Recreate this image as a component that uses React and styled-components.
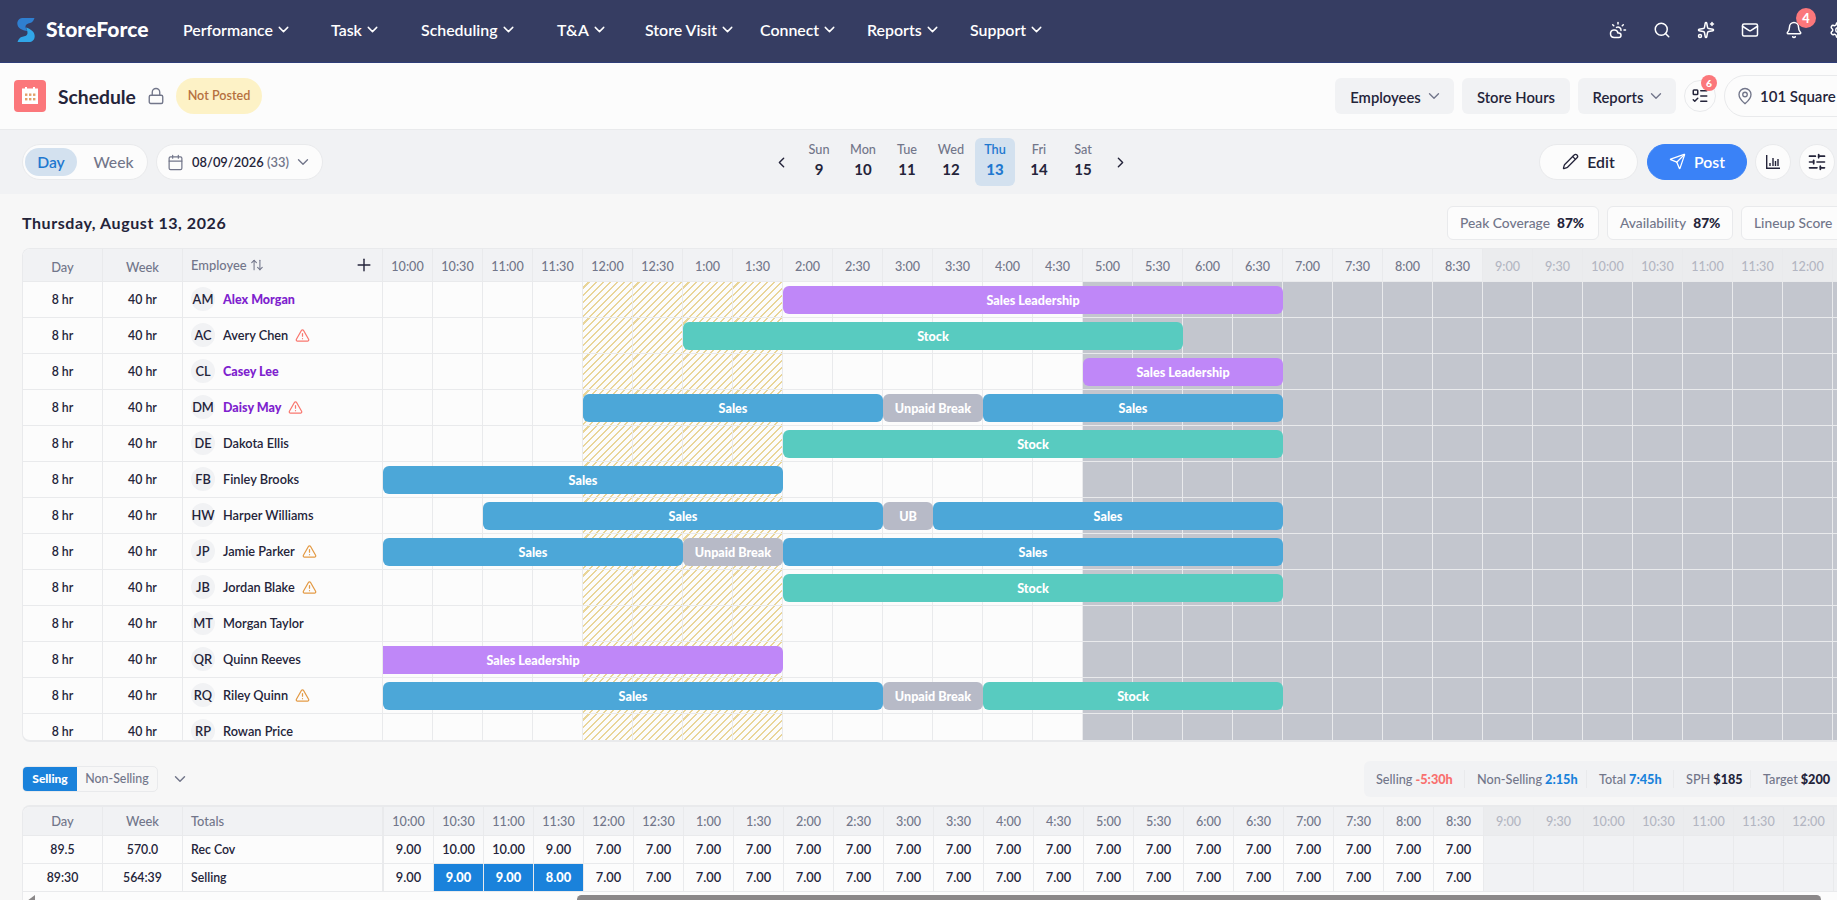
import React from "react";
import styled, { createGlobalStyle, css } from "styled-components";
import {
  AlertTriangle,
  ArrowUpDown,
  Bell,
  Calendar,
  ChevronDown,
  ChevronLeft,
  ChevronRight,
  CloudSun,
  ListTodo,
  Lock,
  Mail,
  MapPin,
  Pencil,
  Plus,
  Search,
  Send,
  Settings,
  SlidersHorizontal,
  Sparkles,
} from "lucide-react";

const GlobalStyle = createGlobalStyle`
  * {
    box-sizing: border-box;
  }
  body {
    margin: 0;
    background: #f7f7f7;
    color: #24243a;
    font-family: Lato, "Liberation Sans", sans-serif;
    overflow: hidden;
  }
  svg {
    flex: none;
  }
`;

const Page = styled.div`
  width: 1837px;
  height: 900px;
  overflow: hidden;
  display: flex;
  flex-direction: column;
`;

const NavBar = styled.header`
  flex: 0 0 63px;
  display: flex;
  align-items: center;
  background: #363d62;
  border-bottom: 1px solid #2f3d78;
  color: #fff;
  padding: 0 0 3px 17px;
`;

const Brand = styled.div`
  display: flex;
  align-items: center;
  gap: 11px;
  flex: 0 0 166px;
  font-size: 21px;
  line-height: 24px;
  font-weight: 900;
  letter-spacing: 0.1px;
`;

const BrandName = styled.span`
  margin-top: -2px;
`;

const NavItem = styled.div`
  flex: 0 0 ${({ $width }) => $width}px;
  display: flex;
  align-items: center;
  gap: 2px;
  padding-bottom: 1px;
  font-size: 15.9px;
  font-weight: 600;
  white-space: nowrap;
`;

const NavIcons = styled.div`
  margin-left: auto;
  display: flex;
  gap: 26px;
  margin-right: -10px;
`;

const IconSlot = styled.span`
  position: relative;
  display: flex;
  width: 18px;
  height: 18px;
  flex: none;
`;

const Badge = styled.span`
  position: absolute;
  top: ${({ $top }) => $top}px;
  left: ${({ $left }) => $left}px;
  width: ${({ $size }) => $size}px;
  height: ${({ $size }) => $size}px;
  border-radius: 50%;
  background: #fb777b;
  color: #fff;
  font-size: ${({ $size }) => $size * 0.64}px;
  font-weight: 900;
  display: flex;
  align-items: center;
  justify-content: center;
`;

const TitleBar = styled.div`
  flex: 0 0 67px;
  display: flex;
  align-items: center;
  padding: 0 0 1px 14px;
  background: #fcfcfc;
  border-bottom: 1px solid #e9eaec;
`;

const CalendarTile = styled.div`
  width: 32px;
  height: 32px;
  border-radius: 4px;
  background: #fb777b;
  display: flex;
  align-items: center;
  justify-content: center;
`;

const PageName = styled.h1`
  margin: 1px 12px 0 12px;
  width: 77px;
  font-size: 19.3px;
  font-weight: 700;
  white-space: nowrap;
`;

const StatusPill = styled.span`
  margin-left: 11px;
  width: 86px;
  height: 36px;
  border-radius: 18px;
  background: #fdf2c6;
  color: #b5703f;
  font-size: 12.6px;
  font-weight: 600;
  display: flex;
  align-items: center;
  justify-content: center;
`;

const HeaderActions = styled.div`
  margin-left: auto;
  display: flex;
  align-items: center;
  gap: 8px;
  margin-right: -60px;
`;

const SoftButton = styled.button`
  width: ${({ $width }) => $width}px;
  height: 36px;
  border: 0;
  border-radius: 6px;
  background: #f1f2f4;
  color: #24243a;
  font: 600 14.8px Lato, sans-serif;
  display: flex;
  align-items: center;
  justify-content: center;
  gap: 4px;
  padding: 2px 0 0;
  white-space: nowrap;
  svg {
    margin: -2px -4px 0 0;
  }
`;

const RoundButton = styled.div`
  position: relative;
  flex: none;
  width: ${({ $size }) => $size}px;
  height: ${({ $size }) => $size}px;
  border: 1px solid #e9eaec;
  border-radius: 50%;
  background: #fcfcfc;
  display: flex;
  align-items: center;
  justify-content: center;
`;

const StorePill = styled.div`
  width: 173px;
  height: 42px;
  border: 1px solid #e9eaec;
  border-radius: 21px;
  display: flex;
  align-items: center;
  gap: 6px;
  padding-left: 11px;
  font-size: 15px;
  font-weight: 600;
  white-space: nowrap;
`;

const Toolbar = styled.div`
  flex: 0 0 64px;
  display: grid;
  grid-template-columns: 751px auto 1fr;
  align-items: center;
  padding: 0 2px 0 22px;
  background: #f1f2f4;
`;

const ToolGroup = styled.div`
  display: flex;
  align-items: center;
  justify-content: ${({ $end }) => ($end ? "flex-end" : "flex-start")};
  gap: 8px;
`;

const pill = css`
  height: 36px;
  border: 1px solid #e9eaec;
  border-radius: 18px;
  background: #fcfcfc;
  display: flex;
  align-items: center;
`;

const Switcher = styled.div`
  ${pill}
  width: 126px;
  padding: 0 2px;
`;

const SwitchOption = styled.span`
  flex: none;
  width: ${({ $active }) => ($active ? 52 : 73)}px;
  height: 28px;
  border-radius: 14px;
  background: ${({ $active }) => ($active ? "#d3e1ef" : "transparent")};
  color: ${({ $active }) => ($active ? "#1f78cf" : "#72768a")};
  font-size: 15.7px;
  font-weight: ${({ $active }) => ($active ? 600 : 500)};
  display: flex;
  align-items: center;
  justify-content: center;
`;

const DatePill = styled.div`
  ${pill}
  width: 167px;
  padding-left: 10px;
  font-size: 12.9px;
  font-weight: 600;
  color: #72768a;
  svg:first-child {
    margin-right: 8px;
  }
  svg:last-child {
    margin-left: 5px;
  }
`;

const DateValue = styled.span`
  width: 75px;
  color: #24243a;
`;

const WeekStrip = styled.div`
  display: flex;
  align-items: center;
  gap: 4px;
`;

const ArrowSlot = styled.span`
  width: 22px;
  display: flex;
  justify-content: ${({ $right }) => ($right ? "flex-end" : "flex-start")};
`;

const DayTile = styled.div`
  width: 40px;
  height: 48px;
  border-radius: 6px;
  background: ${({ $active }) => ($active ? "#d3e1ef" : "transparent")};
  color: ${({ $active }) => ($active ? "#1f78cf" : "#72768a")};
  font-size: 12.7px;
  font-weight: ${({ $active }) => ($active ? 600 : 500)};
  line-height: 20px;
  text-align: center;
  padding-top: 1px;
  b {
    display: block;
    font-size: 15px;
    color: ${({ $active }) => ($active ? "#1f78cf" : "#24243a")};
  }
`;

const ActionButton = styled.button`
  ${pill}
  width: ${({ $primary }) => ($primary ? 100 : 99)}px;
  margin-right: ${({ $primary }) => ($primary ? 0 : 1)}px;
  justify-content: center;
  gap: 8px;
  padding: 0 0 1px;
  font: 600 15.8px Lato, sans-serif;
  background: ${({ $primary }) => ($primary ? "#3a82f7" : "#fcfcfc")};
  border-color: ${({ $primary }) => ($primary ? "#3a82f7" : "#e9eaec")};
  color: ${({ $primary }) => ($primary ? "#fff" : "#24243a")};
`;

const DateRow = styled.div`
  flex: 0 0 54px;
  display: flex;
  align-items: center;
  padding: 4px 0 0 22px;
`;

const DateHeading = styled.h2`
  margin: 0 0 1px;
  font-size: 16px;
  font-weight: 700;
  letter-spacing: 0.57px;
`;

const Chips = styled.div`
  margin-left: auto;
  margin-right: -43px;
  display: flex;
  gap: 8px;
`;

const Chip = styled.div`
  width: ${({ $width }) => $width}px;
  height: 34px;
  border: 1px solid #e9eaec;
  border-radius: 6px;
  background: #fcfcfc;
  padding: 0 0 2px 12px;
  display: flex;
  align-items: center;
  gap: 7px;
  font-size: 13.8px;
  font-weight: 500;
  color: #72768a;
  white-space: nowrap;
  b {
    font-size: 13.7px;
    font-weight: 900;
    color: #24243a;
  }
`;

const Board = styled.div`
  flex: 0 0 494px;
  margin-left: 22px;
  border: 1px solid #e9eaec;
  border-bottom-width: 2px;
  border-right: 0;
  border-radius: 8px 0 0 8px;
  background: #fcfcfc;
  overflow: hidden;
`;

const Row = styled.div`
  display: flex;
  width: 1860px;
  height: ${({ $height }) => $height}px;
`;

const cell = css`
  flex: none;
  display: flex;
  align-items: center;
  border-right: 1px solid #e9eaec;
  border-bottom: 1px solid #e9eaec;
`;

const Cell = styled.div`
  ${cell}
  width: 80px;
  justify-content: center;
  padding-bottom: 1px;
  font-size: 12.3px;
  font-weight: 600;
  ${({ $head }) =>
    $head &&
    css`
      background: #f1f2f4;
      color: #72768a;
      font-weight: 500;
      font-size: 12.9px;
      padding-top: ${({ $drop = 0 }) => $drop}px;
    `}
`;

const EmployeeCell = styled(Cell)`
  width: ${({ $wide }) => ($wide ? 201 : 200)}px;
  border-right-width: ${({ $wide }) => ($wide ? 2 : 1)}px;
  justify-content: flex-start;
  padding: 0 8px 1px 8px;
  & > svg:last-child {
    margin-left: ${({ $head }) => ($head ? "auto" : "7px")};
  }
`;

const SortLabel = styled.span`
  display: flex;
  align-items: center;
  gap: 3px;
`;

const Avatar = styled.span`
  width: 24px;
  height: 24px;
  border-radius: 50%;
  background: #f1f2f4;
  margin-right: 8px;
  display: flex;
  align-items: center;
  justify-content: center;
  font-size: 12.8px;
`;

const EmployeeName = styled.span`
  font-size: 12.75px;
  white-space: nowrap;
  ${({ $lead }) =>
    $lead &&
    css`
      color: #7e22ce;
      font-weight: 900;
      font-size: 12.5px;
    `}
`;

const hatch = css`
  background: repeating-linear-gradient(
    135deg,
    #fcfcfc 0 3.5px,
    #e9d599 3.5px 5px
  );
  background-clip: padding-box;
`;

const Slot = styled.div`
  ${cell}
  width: 50px;
  ${({ $kind }) => $kind === "peak" && hatch}
  ${({ $kind }) => $kind === "closed" && "background: #c3c6ce;"}
`;

const TimeCell = styled.div`
  ${cell}
  width: 50px;
  justify-content: center;
  padding-top: ${({ $drop }) => $drop}px;
  font-size: 12.6px;
  font-weight: 500;
  background: ${({ $closed }) => ($closed ? "#ebecee" : "#f1f2f4")};
  color: ${({ $closed }) => ($closed ? "#b3b6c2" : "#72768a")};
`;

const Lane = styled.div`
  position: relative;
  flex: none;
  display: flex;
  overflow: hidden;
`;

// Shifts lie over the half hour grid, so their place comes from their times.
const Shift = styled.div`
  position: absolute;
  top: 4px;
  height: 28px;
  border-radius: 6px;
  background: ${({ $color }) => $color};
  color: #fff;
  font-size: 12.6px;
  font-weight: 900;
  display: flex;
  align-items: center;
  justify-content: center;
  white-space: nowrap;
`;

const TotalsBar = styled.div`
  flex: 0 0 63px;
  display: flex;
  align-items: center;
  padding: 10px 0 0 22px;
`;

const Tabs = styled.div`
  display: flex;
  height: 26px;
  border: 1px solid #e9eaec;
  border-radius: 5px;
  overflow: hidden;
  margin-right: 13px;
`;

const Tab = styled.span`
  width: ${({ $active }) => ($active ? 54 : 80)}px;
  display: flex;
  align-items: center;
  justify-content: center;
  padding-bottom: 1px;
  font-size: ${({ $active }) => ($active ? 12 : 12.4)}px;
  font-weight: ${({ $active }) => ($active ? 900 : 500)};
  background: ${({ $active }) => ($active ? "#1a82db" : "transparent")};
  color: ${({ $active }) => ($active ? "#fff" : "#72768a")};
`;

const Stats = styled.div`
  margin-left: auto;
  height: 36px;
  width: 473px;
  border-radius: 6px 0 0 6px;
  background: #f1f2f4;
  display: flex;
  align-items: center;
`;

const Stat = styled.div`
  flex: 0 0 ${({ $width }) => $width}px;
  height: 18px;
  padding-left: 12px;
  border-right: 1px solid #e9eaec;
  display: flex;
  align-items: center;
  gap: 3px;
  font-size: 12.7px;
  font-weight: 500;
  color: #72768a;
  white-space: nowrap;
  b {
    font-weight: 900;
    color: ${({ $color }) => $color};
  }
`;

const TotalsBoard = styled.div`
  flex: 0 0 96px;
  margin-left: 22px;
  border-left: 1px solid #e9eaec;
  border-top: 2px solid #e9eaec;
  border-radius: 8px 0 0 0;
  background: #fcfcfc;
  overflow: hidden;
`;

const Value = styled.div`
  ${cell}
  width: 50px;
  justify-content: center;
  padding-bottom: 1px;
  font-size: 12.8px;
  font-weight: ${({ $short }) => ($short ? 900 : 600)};
  color: ${({ $short }) => ($short ? "#fff" : "#24243a")};
  background: ${({ $short, $closed }) =>
    $short ? "#1a82db" : $closed ? "#f1f2f4" : "#fcfcfc"};
  background-clip: padding-box;
`;

const ScrollTrack = styled.div`
  height: 12px;
  display: flex;
  padding: 3px 0 0 4px;
`;

const ScrollThumb = styled.div`
  width: 1244px;
  height: 9px;
  margin-left: 542px;
  border-radius: 5px;
  background: #8b8889;
`;

const NAV = [
  ["Performance", 148],
  ["Task", 90],
  ["Scheduling", 136],
  ["T&A", 88],
  ["Store Visit", 115],
  ["Connect", 107],
  ["Reports", 103],
  ["Support", 90],
];

const DAYS = [
  ["Sun", 9],
  ["Mon", 10],
  ["Tue", 11],
  ["Wed", 12],
  ["Thu", 13],
  ["Fri", 14],
  ["Sat", 15],
];

// Half hour slots from 10:00 in the morning up to midnight, and a blank one.
const TIMES = Array.from({ length: 30 }, (_, i) => {
  if (i === 29) return "";
  const hour = ((9 + Math.floor(i / 2)) % 12) + 1;
  return `${hour}:${i % 2 ? "30" : "00"}`;
});

const COLORS = {
  "Sales Leadership": "#bf87f8",
  Stock: "#58cbc0",
  Sales: "#4ca7d8",
  "Unpaid Break": "#b7bac7",
  UB: "#b7bac7",
};

const RED = "#f9776f";
const ORANGE = "#e39a45";

// shifts: [label, first slot, slot count]
const EMPLOYEES = [
  { id: "AM", name: "Alex Morgan", lead: true, shifts: [["Sales Leadership", 8, 10]] },
  { id: "AC", name: "Avery Chen", warn: RED, shifts: [["Stock", 6, 10]] },
  { id: "CL", name: "Casey Lee", lead: true, shifts: [["Sales Leadership", 14, 4]] },
  {
    id: "DM",
    name: "Daisy May",
    lead: true,
    warn: RED,
    shifts: [["Sales", 4, 6], ["Unpaid Break", 10, 2], ["Sales", 12, 6]],
  },
  { id: "DE", name: "Dakota Ellis", shifts: [["Stock", 8, 10]] },
  { id: "FB", name: "Finley Brooks", shifts: [["Sales", 0, 8]] },
  {
    id: "HW",
    name: "Harper Williams",
    shifts: [["Sales", 2, 8], ["UB", 10, 1], ["Sales", 11, 7]],
  },
  {
    id: "JP",
    name: "Jamie Parker",
    warn: ORANGE,
    shifts: [["Sales", 0, 6], ["Unpaid Break", 6, 2], ["Sales", 8, 10]],
  },
  { id: "JB", name: "Jordan Blake", warn: ORANGE, shifts: [["Stock", 8, 10]] },
  { id: "MT", name: "Morgan Taylor", shifts: [] },
  { id: "QR", name: "Quinn Reeves", shifts: [["Sales Leadership", -2, 10]] },
  {
    id: "RQ",
    name: "Riley Quinn",
    warn: ORANGE,
    shifts: [["Sales", 0, 10], ["Unpaid Break", 10, 2], ["Stock", 12, 6]],
  },
  { id: "RP", name: "Rowan Price", shifts: [] },
];

const TOTALS = [
  { day: "89.5", week: "570.0", name: "Rec Cov", values: ["9.00", "10.00", "10.00", "9.00"] },
  {
    day: "89:30",
    week: "564:39",
    name: "Selling",
    values: ["9.00", "9.00", "9.00", "8.00"],
    short: [1, 2, 3],
  },
];

const slotKind = (i) => {
  if (i >= 14) return "closed";
  if (i >= 4 && i < 8) return "peak";
  return "open";
};

const Logo = () => (
  <svg width="18" height="24" viewBox="0 0 18 24">
    <path
      d="M5 0H17.5C16.5 3 15 4.5 13 5C10.500 5.600 8.500 6.500 8.500 8.500C8.500 10 9.500 11.500 10.500 13C5 12.500 .3 10 .3 5.500C.3 2.500 2.500 .3 5 0Z"
      fill="#2f7fd0"
    />
    <path
      d="M9 9.500C13.500 11 17.700 13.500 17.700 18C17.700 22 15 24 12 24H.5C1.500 21 3 19.300 5.500 18.800C8 18.300 10.500 17.500 10.500 15C10.500 13 9.800 11.500 9 9.500Z"
      fill="#31a6e8"
    />
  </svg>
);

const CalendarGlyph = () => (
  <svg width="16" height="17" viewBox="0 0 16 17">
    <path d="M0 1.500H3V0H5V1.500H11V0H13V1.500H16V17H0Z" fill="#fff" />
    <g fill="#e2a06a">
      {[3, 7, 11].map((x) =>
        [6.5, 11].map((y) => <rect key={`${x}-${y}`} x={x} y={y} width="2.400" height="2.400" />)
      )}
    </g>
  </svg>
);

const ChartGlyph = () => (
  <svg width="14" height="14" viewBox="0 0 14 14" fill="none" stroke="#24243a" strokeWidth="1.400">
    <path d="M.7 0V13.300H14M4 11V8M7 11V3M9.500 11V6M12 11V4" />
  </svg>
);

const NavBarSection = () => (
  <NavBar>
    <Brand>
      <Logo />
      <BrandName>StoreForce</BrandName>
    </Brand>
    {NAV.map(([label, width]) => (
      <NavItem key={label} $width={width}>
        {label}
        <ChevronDown size={17} strokeWidth={2} />
      </NavItem>
    ))}
    <NavIcons>
      {[CloudSun, Search, Sparkles, Mail, Bell, Settings].map((Icon, i) => (
        <IconSlot key={i}>
          <Icon size={18} strokeWidth={2} />
          {Icon === Bell && (
            <Badge $size={20} $top={-13} $left={11}>
              4
            </Badge>
          )}
        </IconSlot>
      ))}
    </NavIcons>
  </NavBar>
);

const TitleSection = () => (
  <TitleBar>
    <CalendarTile>
      <CalendarGlyph />
    </CalendarTile>
    <PageName>Schedule</PageName>
    <Lock size={18} color="#72768a" strokeWidth={1.8} />
    <StatusPill>Not Posted</StatusPill>
    <HeaderActions>
      <SoftButton $width={119}>
        Employees
        <ChevronDown size={18} color="#72768a" strokeWidth={1.8} />
      </SoftButton>
      <SoftButton $width={108}>Store Hours</SoftButton>
      <SoftButton $width={98}>
        Reports
        <ChevronDown size={18} color="#72768a" strokeWidth={1.8} />
      </SoftButton>
      <RoundButton $size={32}>
        <ListTodo size={18} />
        <Badge $size={16} $top={-6} $left={16}>
          6
        </Badge>
      </RoundButton>
      <StorePill>
        <MapPin size={18} color="#72768a" strokeWidth={1.8} />
        101 Square
      </StorePill>
    </HeaderActions>
  </TitleBar>
);

const ToolbarSection = () => (
  <Toolbar>
    <ToolGroup>
      <Switcher>
        <SwitchOption $active>Day</SwitchOption>
        <SwitchOption>Week</SwitchOption>
      </Switcher>
      <DatePill>
        <Calendar size={17} strokeWidth={1.7} />
        <DateValue>08/09/2026</DateValue>
        (33)
        <ChevronDown size={18} strokeWidth={1.8} />
      </DatePill>
    </ToolGroup>
    <WeekStrip>
      <ArrowSlot>
        <ChevronLeft size={17} />
      </ArrowSlot>
      {DAYS.map(([day, date]) => (
        <DayTile key={day} $active={date === 13}>
          {day}
          <b>{date}</b>
        </DayTile>
      ))}
      <ArrowSlot $right>
        <ChevronRight size={17} />
      </ArrowSlot>
    </WeekStrip>
    <ToolGroup $end>
      <ActionButton>
        <Pencil size={17} strokeWidth={1.8} />
        Edit
      </ActionButton>
      <ActionButton $primary>
        <Send size={17} strokeWidth={1.8} />
        Post
      </ActionButton>
      <RoundButton $size={36}>
        <ChartGlyph />
      </RoundButton>
      <RoundButton $size={36}>
        <SlidersHorizontal size={20} />
      </RoundButton>
    </ToolGroup>
  </Toolbar>
);

const Schedule = () => (
  <Board>
    <Row $height={33}>
      <Cell $head $drop={4}>
        Day
      </Cell>
      <Cell $head $drop={4}>
        Week
      </Cell>
      <EmployeeCell $head>
        <SortLabel>
          Employee
          <ArrowUpDown size={14} strokeWidth={1.8} />
        </SortLabel>
        <Plus size={20} color="#24243a" strokeWidth={1.7} />
      </EmployeeCell>
      {TIMES.map((time, i) => (
        <TimeCell key={i} $drop={3} $closed={i >= 22}>
          {time}
        </TimeCell>
      ))}
    </Row>
    {EMPLOYEES.map(({ id, name, lead, warn, shifts }) => (
      <Row key={id} $height={36}>
        <Cell>8 hr</Cell>
        <Cell>40 hr</Cell>
        <EmployeeCell>
          <Avatar>{id}</Avatar>
          <EmployeeName $lead={lead}>{name}</EmployeeName>
          {warn && <AlertTriangle size={15} color={warn} />}
        </EmployeeCell>
        <Lane>
          {TIMES.map((_, i) => (
            <Slot key={i} $kind={slotKind(i)} />
          ))}
          {shifts.map(([label, start, count]) => (
            <Shift
              key={start}
              $color={COLORS[label]}
              style={{ left: start * 50, width: count * 50 }}
            >
              {label}
            </Shift>
          ))}
        </Lane>
      </Row>
    ))}
  </Board>
);

const Totals = () => (
  <TotalsBoard>
    <Row $height={29}>
      <Cell $head>Day</Cell>
      <Cell $head>Week</Cell>
      <EmployeeCell $head $wide>
        Totals
      </EmployeeCell>
      {TIMES.map((time, i) => (
        <TimeCell key={i} $drop={0} $closed={i >= 22}>
          {time}
        </TimeCell>
      ))}
    </Row>
    {TOTALS.map(({ day, week, name, values, short = [] }) => (
      <Row key={name} $height={28}>
        <Cell>{day}</Cell>
        <Cell>{week}</Cell>
        <EmployeeCell $wide>{name}</EmployeeCell>
        {TIMES.map((_, i) => (
          <Value key={i} $short={short.includes(i)} $closed={i >= 22}>
            {i < 22 && (values[i] || "7.00")}
          </Value>
        ))}
      </Row>
    ))}
    <ScrollTrack>
      <svg width="8" height="9" viewBox="0 0 8 9">
        <path d="M8 0V9H0V6Z" fill="#8b8889" />
      </svg>
      <ScrollThumb />
    </ScrollTrack>
  </TotalsBoard>
);

const App = () => {
  return (
    <Page>
      <GlobalStyle />
      <NavBarSection />
      <TitleSection />
      <ToolbarSection />
      <DateRow>
        <DateHeading>Thursday, August 13, 2026</DateHeading>
        <Chips>
          <Chip $width={152}>
            Peak Coverage <b>87%</b>
          </Chip>
          <Chip $width={126}>
            Availability <b>87%</b>
          </Chip>
          <Chip $width={139}>Lineup Score</Chip>
        </Chips>
      </DateRow>
      <Schedule />
      <TotalsBar>
        <Tabs>
          <Tab $active>Selling</Tab>
          <Tab>Non-Selling</Tab>
        </Tabs>
        <ChevronDown size={18} color="#72768a" strokeWidth={1.9} />
        <Stats>
          <Stat $width={101} $color="#f9706f">
            Selling <b>-5:30h</b>
          </Stat>
          <Stat $width={122} $color="#1a82db">
            Non-Selling <b>2:15h</b>
          </Stat>
          <Stat $width={87} $color="#1a82db">
            Total <b>7:45h</b>
          </Stat>
          <Stat $width={77} $color="#24243a">
            SPH <b>$185</b>
          </Stat>
          <Stat $width={110} $color="#24243a">
            Target <b>$200</b>
          </Stat>
        </Stats>
      </TotalsBar>
      <Totals />
    </Page>
  );
};

export default App;
